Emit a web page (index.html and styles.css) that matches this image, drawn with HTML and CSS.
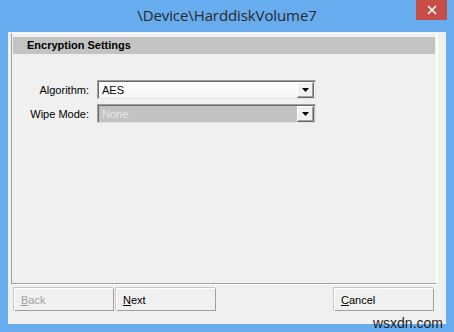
FILE: index.html
```html
<!DOCTYPE html>
<html>
<head>
<meta charset="utf-8">
<link rel="stylesheet" href="styles.css">
</head>
<body>
<div class="window">
  <div class="titlebar">
    <span class="title">\Device\HarddiskVolume7</span>
    <button class="close" aria-label="Close">
      <svg width="10" height="10" viewBox="0 0 10 10"><path d="M1 1L9 9M9 1L1 9" stroke="#fff" stroke-width="1.6"/></svg>
    </button>
  </div>
  <div class="client">
    <div class="panel">
      <div class="panel-header">Encryption Settings</div>
      <div class="form">
        <div class="row">
          <label class="lbl">Algorithm:</label>
          <div class="combo">
            <span class="value">AES</span>
            <span class="drop"><svg width="7" height="4" viewBox="0 0 7 4"><path d="M0 0H7L3.5 4Z" fill="#000"/></svg></span>
          </div>
        </div>
        <div class="row">
          <label class="lbl">Wipe Mode:</label>
          <div class="combo disabled">
            <span class="value">None</span>
            <span class="drop"><svg width="7" height="4" viewBox="0 0 7 4"><path d="M0 0H7L3.5 4Z" fill="#000"/></svg></span>
          </div>
        </div>
      </div>
    </div>
    <div class="buttons">
      <button class="btn disabled"><u>B</u>ack</button>
      <button class="btn"><u>N</u>ext</button>
      <span class="spacer"></span>
      <button class="btn"><u>C</u>ancel</button>
    </div>
  </div>
  <div class="watermark">wsxdn.com</div>
</div>
</body>
</html>
```

FILE: styles.css
```css
* { box-sizing: border-box; }
html, body { margin: 0; padding: 0; }
body {
  width: 454px;
  height: 332px;
  overflow: hidden;
  background: #67acef;
  font-family: "Liberation Sans", Arial, sans-serif;
  font-size: 11px;
  color: #000;
}
.window {
  position: relative;
  width: 454px;
  height: 332px;
  background: #67acef;
  display: flex;
  flex-direction: column;
  padding: 0 8px 8px 8px;
}
.titlebar {
  height: 32px;
  position: relative;
  display: flex;
  align-items: center;
  justify-content: center;
}
.title {
  font-family: "Open Sans", "Noto Sans", sans-serif;
  font-size: 15px;
  color: #2a2a2a;
  margin-top: -3px;
  letter-spacing: -0.1px;
}
.close {
  position: absolute;
  top: 0;
  right: -1px;
  width: 31px;
  height: 20px;
  border: none;
  padding: 0;
  background: #c74d48;
  display: flex;
  align-items: center;
  justify-content: center;
}
.client {
  flex: 1;
  background: #f0f0f0;
  display: flex;
  flex-direction: column;
  padding: 1px 9px 0 3px;
}
.panel {
  height: 251px;
  border-left: 1px solid #a0a0a0;
  border-bottom: 1px solid #a0a0a0;
  border-top: 1px solid #fff;
  border-right: 1px solid #fff;
  box-shadow: 1px 1px 0 #fff;
  padding: 3px 1px 0 1px;
}
.panel-header {
  height: 17px;
  background: #c3c3c3;
  font-weight: bold;
  padding-left: 14px;
  line-height: 17px;
}
.form {
  margin-top: 26px;
  display: flex;
  flex-direction: column;
  gap: 5px;
}
.row {
  display: flex;
  align-items: center;
  height: 19px;
}
.lbl {
  width: 76px;
  text-align: right;
  margin-right: 8px;
}
.combo {
  width: 219px;
  height: 19px;
  display: flex;
  align-items: center;
  background: linear-gradient(#ffffff, #f6f6f6);
  border-top: 1px solid #a0a0a0;
  border-left: 1px solid #a0a0a0;
  border-right: 1px solid #e3e3e3;
  border-bottom: 1px solid #e3e3e3;
  box-shadow: inset 1px 1px 0 #696969;
  padding: 1px 1px 1px 4px;
}
.combo .value { flex: 1; }
.combo.disabled { background: #c2c2c2; }
.combo.disabled .value { color: #e8e8e8; }
.drop {
  width: 17px;
  height: 16px;
  background: #f0f0f0;
  border-top: 1px solid #fff;
  border-left: 1px solid #fff;
  border-right: 1px solid #696969;
  border-bottom: 1px solid #696969;
  box-shadow: inset -1px -1px 0 #a0a0a0;
  display: flex;
  align-items: center;
  justify-content: center;
}
.buttons {
  display: flex;
  margin-top: 4px;
  gap: 2px;
  padding: 0 3px 0 3px;
}
.spacer { flex: 1; }
.btn {
  width: 100px;
  height: 23px;
  font-family: "Liberation Sans", Arial, sans-serif;
  font-size: 11px;
  text-align: left;
  padding: 0 6px;
  background: #f0f0f0;
  border-top: 1px solid #fff;
  border-left: 1px solid #fff;
  border-right: 1px solid #a0a0a0;
  border-bottom: 1px solid #a0a0a0;
  box-shadow: -1px -1px 0 #c8c8c8;
  color: #000;
}
.btn.disabled { color: #a0a0a0; }
.watermark {
  position: absolute;
  right: 11px;
  bottom: 1px;
  font-family: "Liberation Sans", Arial, sans-serif;
  font-size: 14px;
  color: #1e1e1e;
}
```
